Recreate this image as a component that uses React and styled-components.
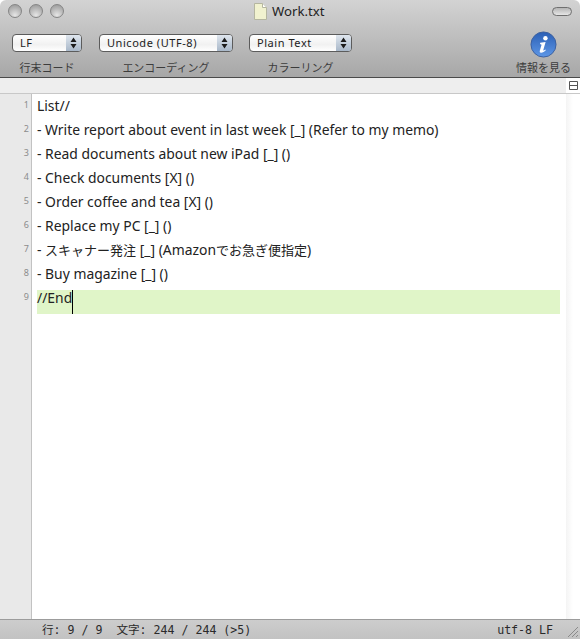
import React from 'react';
import styled, { createGlobalStyle } from 'styled-components';

const GlobalStyle = createGlobalStyle`
  html, body { margin: 0; padding: 0; background: #fff; }
  #root { width: 580px; height: 639px; overflow: hidden; }
`;

const uiFont = `"Noto Sans", "Noto Sans CJK JP", sans-serif`;
const jpFont = `"Noto Sans CJK JP", sans-serif`;
const monoFont = `"DejaVu Sans Mono", "Noto Sans CJK JP", monospace`;

const Window = styled.div`
  width: 580px;
  height: 639px;
  display: flex;
  flex-direction: column;
`;

const Chrome = styled.header`
  height: 78px;
  flex: none;
  box-sizing: border-box;
  border-radius: 6px 6px 0 0;
  border-bottom: 1px solid #4a4a4a;
  background: linear-gradient(#d3d3d3, #c6c6c6 30%, #a7a7a7);
  display: flex;
  flex-direction: column;
`;

const TitleBar = styled.div`
  height: 24px;
  box-sizing: border-box;
  display: flex;
  align-items: center;
  justify-content: space-between;
  padding: 0 8px 2px 8px;
  position: relative;
`;

const Lights = styled.div`
  display: flex;
  gap: 7px;
`;

const Light = styled.span`
  width: 14px;
  height: 14px;
  box-sizing: border-box;
  border-radius: 50%;
  border: 1px solid #858585;
  background: radial-gradient(circle at 50% 85%, #e6e6e6, #b4b4b4 60%, #949494);
`;

const Title = styled.div`
  position: absolute;
  left: 254px;
  top: 1px;
  display: flex;
  align-items: center;
  gap: 5px;
  font: 13.2px/20px ${uiFont};
  color: #222;
`;

const Pill = styled.span`
  width: 20px;
  height: 9px;
  box-sizing: border-box;
  border-radius: 5px;
  border: 1px solid #6f6f6f;
  background: linear-gradient(#b5b5b5, #e6e6e6);
`;

const ToolRow = styled.div`
  display: flex;
  padding: 10px 9px 0 12px;
`;

const ToolItem = styled.div`
  display: flex;
  flex-direction: column;
  align-items: center;
  margin-right: ${(p) => p.$gap}px;
`;

const ToolLabel = styled.span`
  margin-top: 7px;
  font: 11px/16px ${jpFont};
  color: #3c3c3c;
  white-space: nowrap;
`;

const Popup = styled.div`
  width: ${(p) => p.$width}px;
  height: 18px;
  box-sizing: border-box;
  display: flex;
  border-radius: 4px;
  border: 1px solid #5c5c5c;
  background: linear-gradient(#fff, #f1f1f1 60%, #fff);
  overflow: hidden;
  font: 11px/16px ${uiFont};
  color: #222;
`;

const PopupText = styled.span`
  flex: 1;
  padding-left: 7px;
  white-space: nowrap;
  letter-spacing: 0.55px;
`;

const PopupArrows = styled.span`
  width: 15px;
  display: flex;
  align-items: center;
  justify-content: center;
  background: linear-gradient(#dfe6ee, #a9b8c9);
`;

const Spacer = styled.div`
  flex: 1;
`;

const InfoItem = styled.div`
  display: flex;
  flex-direction: column;
  align-items: center;
  margin-top: -3px;
`;

const InfoLabel = styled(ToolLabel)`
  margin-top: 1px;
`;

const Ruler = styled.div`
  height: 16px;
  flex: none;
  box-sizing: border-box;
  background: #eeeeee;
  border-bottom: 1px solid #c8c8c8;
  display: flex;
  justify-content: flex-end;
`;

const SplitButton = styled.div`
  width: 14px;
  background: #fff;
  display: flex;
  align-items: center;
  justify-content: center;
`;

const Body = styled.main`
  flex: 1;
  display: flex;
  min-height: 0;
`;

const Gutter = styled.div`
  width: 32px;
  flex: none;
  box-sizing: border-box;
  background: #e9e9e9;
  border-right: 1px solid #c2c2c2;
`;

const LineNumber = styled.div`
  height: 24px;
  padding-right: 2px;
  text-align: right;
  font: 9px/22px ${uiFont};
  color: #8c8c8c;
`;

const Editor = styled.div`
  flex: 1;
  padding: 4px 6px 0 5px;
`;

const Line = styled.div`
  height: 24px;
  background: ${(p) => (p.$active ? '#e0f5c8' : 'transparent')};
  font: 13.9px/16px ${uiFont};
  color: #222;
  white-space: nowrap;
`;

const Japanese = styled.span`
  font-family: ${jpFont};
  font-size: 13px;
`;

const Caret = styled.span`
  display: inline-block;
  width: 1px;
  height: 24px;
  vertical-align: top;
  background: #000;
`;

const ScrollTrack = styled.div`
  width: 14px;
  flex: none;
  background: linear-gradient(90deg, #f4f4f4, #fff 50%);
`;

const StatusBar = styled.footer`
  height: 20px;
  flex: none;
  box-sizing: border-box;
  border-top: 1px solid #9c9c9c;
  background: linear-gradient(#cdcdcd, #c2c2c2);
  display: flex;
  justify-content: space-between;
  padding: 0 27px 0 42px;
  position: relative;
  font: 11.6px/20px ${monoFont};
  color: #2a2a2a;
  white-space: pre;
`;

const Grip = styled.svg`
  position: absolute;
  right: 1px;
  bottom: 1px;
`;

const Arrows = () => (
  <svg width="7" height="12" viewBox="0 0 7 12">
    <path d="M3.5 0.5 6.5 5H0.5Z M3.5 11.5 0.5 7H6.5Z" fill="#1c1c1c" />
  </svg>
);

const Select = ({ width, children }) => (
  <Popup $width={width}>
    <PopupText>{children}</PopupText>
    <PopupArrows>
      <Arrows />
    </PopupArrows>
  </Popup>
);

const DocIcon = () => (
  <svg width="13" height="17" viewBox="0 0 13 17">
    <path d="M.5.5H8.5L12.5 4.5V16.5H.5Z" fill="#f1f2cf" stroke="#b5b6a0" />
    <path d="M8.5.5V4.5H12.5" fill="#fff" stroke="#b5b6a0" />
  </svg>
);

const InfoIcon = () => (
  <svg width="27" height="27" viewBox="0 0 28 28">
    <defs>
      <linearGradient id="infoFill" x1="0" y1="0" x2="0" y2="1">
        <stop offset="0" stopColor="#2b5fb5" />
        <stop offset="1" stopColor="#5e97e6" />
      </linearGradient>
    </defs>
    <circle cx="14" cy="14" r="13" fill="url(#infoFill)" stroke="#3a5f9e" />
    <circle cx="16" cy="7.6" r="2.3" fill="#fff" />
    <path d="M10.6 12.2 16.2 11.4 13.8 19.6C13.6 20.4 14.3 20.5 16 19.2L16.4 20C14.6 22 12 23 10.7 22.3 9.9 21.9 10 20.9 10.3 19.9L12 14.2 10.4 13.6Z" fill="#fff" />
  </svg>
);

const lines = [
  'List//',
  '- Write report about event in last week [_] (Refer to my memo)',
  '- Read documents about new iPad [_] ()',
  '- Check documents [X] ()',
  '- Order coffee and tea [X] ()',
  '- Replace my PC [_] ()',
  <>
    - <Japanese>スキャナー発注</Japanese> [_] (Amazon<Japanese>でお急ぎ便指定</Japanese>)
  </>,
  '- Buy magazine [_] ()',
];

const App = () => (
  <Window>
    <GlobalStyle />
    <Chrome>
      <TitleBar>
        <Lights>
          <Light />
          <Light />
          <Light />
        </Lights>
        <Title>
          <DocIcon />
          Work.txt
        </Title>
        <Pill />
      </TitleBar>
      <ToolRow>
        <ToolItem $gap={17}>
          <Select width={70}>LF</Select>
          <ToolLabel>行末コード</ToolLabel>
        </ToolItem>
        <ToolItem $gap={16}>
          <Select width={134}>Unicode (UTF-8)</Select>
          <ToolLabel>エンコーディング</ToolLabel>
        </ToolItem>
        <ToolItem $gap={0}>
          <Select width={103}>Plain Text</Select>
          <ToolLabel>カラーリング</ToolLabel>
        </ToolItem>
        <Spacer />
        <InfoItem>
          <InfoIcon />
          <InfoLabel>情報を見る</InfoLabel>
        </InfoItem>
      </ToolRow>
    </Chrome>
    <Ruler>
      <SplitButton>
        <svg width="9" height="9" viewBox="0 0 9 9">
          <path d="M.5.5H8.5V8.5H.5Z M.5 4.5H8.5" fill="none" stroke="#555" />
        </svg>
      </SplitButton>
    </Ruler>
    <Body>
      <Gutter>
        {[...lines, '//End'].map((_, i) => (
          <LineNumber key={i}>{i + 1}</LineNumber>
        ))}
      </Gutter>
      <Editor>
        {lines.map((text, i) => (
          <Line key={i}>{text}</Line>
        ))}
        <Line $active>
          //End
          <Caret />
        </Line>
      </Editor>
      <ScrollTrack />
    </Body>
    <StatusBar>
      <span>行: 9 / 9  文字: 244 / 244 (&gt;5)</span>
      <span>utf-8 LF</span>
      <Grip width="13" height="13" viewBox="0 0 13 13">
        <path d="M12 2 2 12M12 6 6 12M12 10 10 12" stroke="#8a8a8a" fill="none" />
      </Grip>
    </StatusBar>
  </Window>
);

export default App;
